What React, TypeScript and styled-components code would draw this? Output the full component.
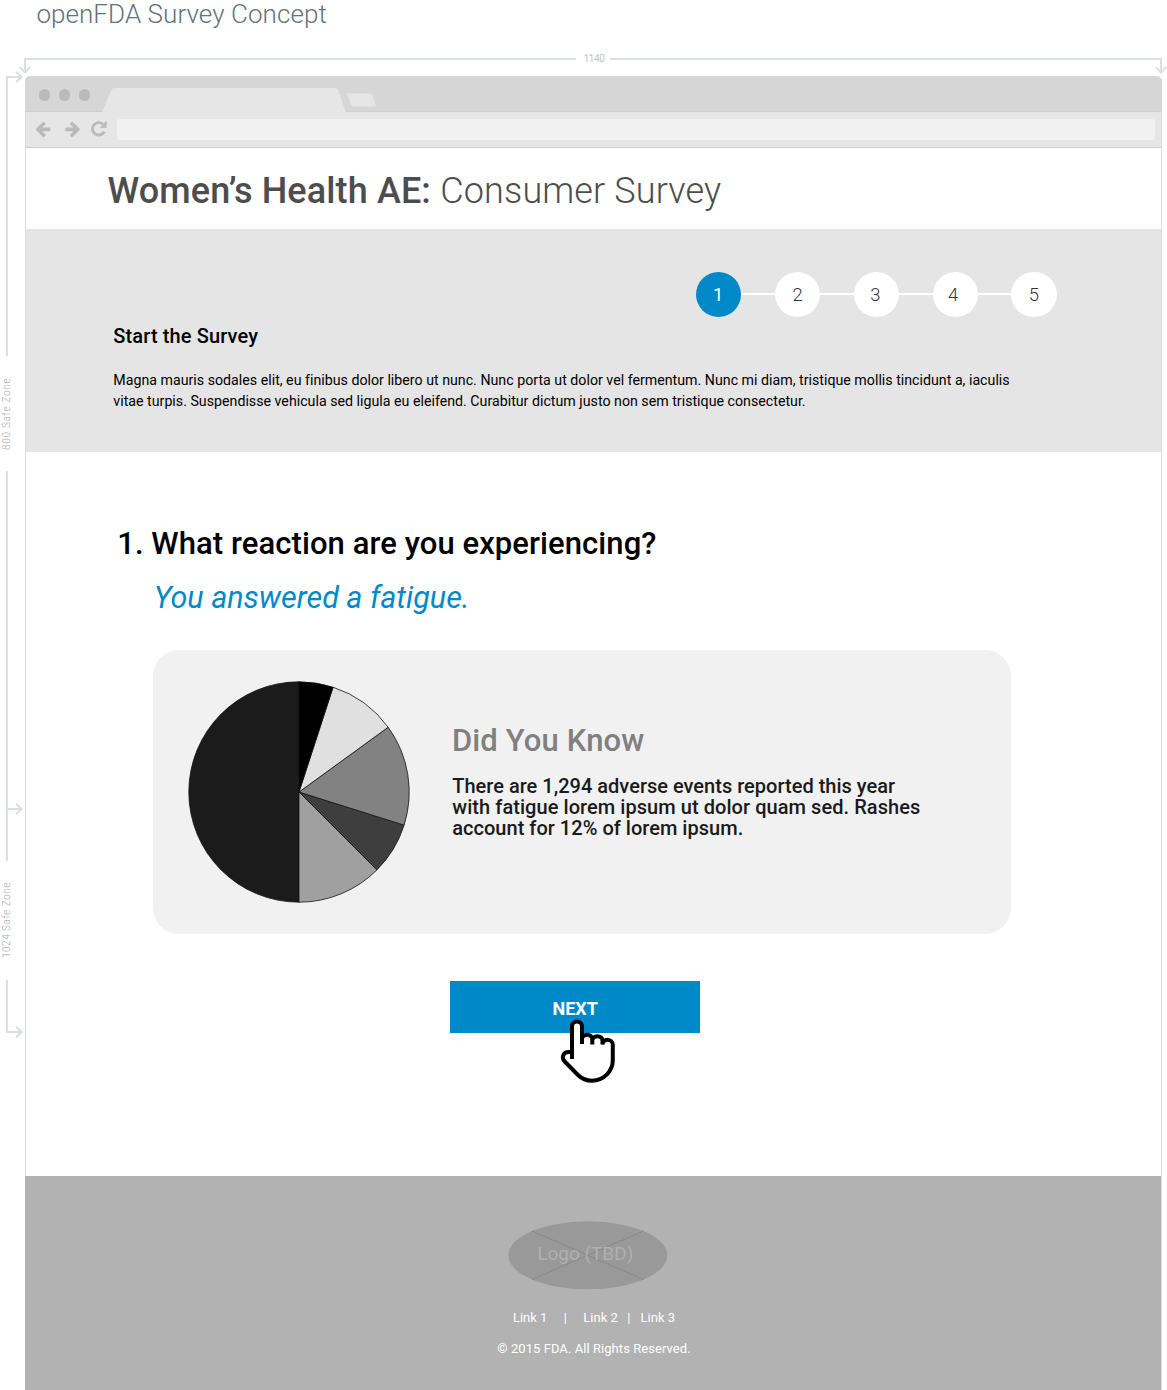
import React from "react";
import styled, { createGlobalStyle } from "styled-components";

const ruler = "#dbdfdf";
const blue = "#0089c9";

const GlobalStyle = createGlobalStyle`
  * { box-sizing: border-box; }
  body { margin: 0; background: #fff; font-family: Roboto, "Liberation Sans", sans-serif; color: #000; }
  h1, h2, h3, p, ol { margin: 0; padding: 0; }
`;

const Page = styled.div`
  width: 1167px;
  height: 1390px;
  overflow: hidden;
  display: grid;
  grid-template-columns: 25px 1137px;
  grid-template-rows: 58px 18px 1fr;
`;

const ConceptTitle = styled.div`
  grid-column: 1 / -1;
  padding-left: 36.4px;
  font-size: 26px;
  font-weight: 300;
  line-height: 28px;
  letter-spacing: 0.06px;
  color: #647278;
  white-space: nowrap;
`;

/* Dimension rulers */
const TopRuler = styled.div`
  grid-column: 2;
  display: flex;
  align-items: flex-start;
  margin-left: -1px;
`;

const TopSegment = styled.div<{ $end?: "left" | "right" }>`
  position: relative;
  height: 14px;
  border: 0 solid ${ruler};
  border-top-width: 2px;
  ${(p) => (p.$end === "left" ? "border-left-width: 2px; width: 552px;" : "border-right-width: 2px; flex: 1;")}
`;

const TopLabel = styled.span`
  width: 34px;
  margin-top: -5px;
  padding-left: 2px;
  text-align: center;
  font-size: 10px;
  line-height: 12px;
  letter-spacing: -0.45px;
  color: #bfc4c4;
`;

const LeftRuler = styled.div`
  grid-column: 1;
  grid-row: 3;
  display: flex;
  flex-direction: column;
  align-items: flex-start;
  padding-left: 6px;
`;

const LeftSegment = styled.div<{ $h: number; $top?: boolean; $bottom?: boolean }>`
  position: relative;
  width: 16px;
  height: ${(p) => p.$h}px;
  border: 0 solid ${ruler};
  border-left-width: 2px;
  border-top-width: ${(p) => (p.$top ? 2 : 0)}px;
  border-bottom-width: ${(p) => (p.$bottom ? 2 : 0)}px;
`;

const Tick = styled.i`
  display: block;
  width: 14px;
  height: 2px;
  margin-top: 337px;
  background: ${ruler};
`;

const LeftLabel = styled.span<{ $h: number; $spacing: number }>`
  height: ${(p) => p.$h}px;
  width: 12px;
  margin-left: -5px;
  display: flex;
  align-items: center;
  justify-content: center;
  writing-mode: vertical-rl;
  transform: rotate(180deg);
  font-size: 10px;
  font-weight: 300;
  line-height: 12px;
  letter-spacing: ${(p) => p.$spacing}px;
  color: #a9b0b0;
  white-space: nowrap;
`;

const HeadSvg = styled.svg<{ $x: number; $y: number; $down?: boolean }>`
  position: absolute;
  left: ${(p) => p.$x}px;
  top: ${(p) => p.$y}px;
  width: 12px;
  height: 12px;
  transform: rotate(${(p) => (p.$down ? 90 : 0)}deg);
  fill: none;
  stroke: ${ruler};
  stroke-width: 2;
`;

const Head = (p: { $x: number; $y: number; $down?: boolean }) => (
  <HeadSvg viewBox="0 0 12 12" {...p}><path d="M3 .8 8.6 6 3 11.2" /></HeadSvg>
);

/* Browser window */
const Browser = styled.div`
  grid-column: 2;
  grid-row: 3;
  display: flex;
  flex-direction: column;
`;

const TabBar = styled.div`
  height: 36px;
  display: flex;
  align-items: flex-end;
  background: #d6d6d6;
  border-top: 1px solid #dadada;
  border-bottom: 1px solid #cfcfcf;
  border-radius: 5px 5px 0 0;
`;

const Dots = styled.div`
  display: flex;
  gap: 8.6px;
  padding: 0 0 10.2px 13.6px;
  width: 77px;
`;

const Dot = styled.i`
  width: 11.4px;
  height: 11.4px;
  flex: none;
  border-radius: 50%;
  background: #b9babc;
`;

const TabShapes = styled.svg`
  width: 280px;
  height: 24px;
  margin-bottom: -1px;
`;

const Toolbar = styled.div`
  height: 36px;
  display: flex;
  align-items: center;
  padding: 0 6px 0 7.5px;
  background: #e6e6e6;
  border-bottom: 1px solid #cdcdcd;
  border-left: 1px solid #dcdcdc;
  border-right: 1px solid #dcdcdc;
`;

const NavIcon = styled.svg<{ $size: number; $gap: number; $flip?: boolean }>`
  width: ${(p) => p.$size}px;
  height: ${(p) => p.$size}px;
  margin: 0 ${(p) => p.$gap}px 1px 0;
  flex: none;
  fill: #b9babc;
  transform: ${(p) => (p.$flip ? "scaleX(-1)" : "none")};
`;

const AddressBar = styled.div`
  flex: 1;
  height: 21px;
  border-radius: 3px;
  background: #f1f1f1;
`;

const Content = styled.main`
  flex: 1;
  display: flex;
  flex-direction: column;
  border: solid #dcdcdc;
  border-width: 0 1px;
`;

const Header = styled.header`
  height: 81px;
  padding: 22px 0 0 81.5px;
`;

const SiteTitle = styled.h1`
  display: flex;
  gap: 9.3px;
  font-size: 36px;
  line-height: 42px;
  font-weight: 500;
  letter-spacing: 0.13px;
  color: #4d4d4d;
  white-space: nowrap;
`;

const Light = styled.span`
  font-weight: 300;
`;

const Intro = styled.section`
  height: 223px;
  background: #e5e5e5;
  padding: 42.7px 104.5px 0 87.3px;
`;

const Steps = styled.ol`
  display: flex;
  justify-content: flex-end;
  align-items: center;
  list-style: none;
`;

const Step = styled.li<{ $active?: boolean; $nudge: number }>`
  width: 45.2px;
  height: 45.2px;
  border-radius: 50%;
  display: flex;
  align-items: center;
  justify-content: center;
  padding-right: ${(p) => p.$nudge}px;
  font-size: 18.4px;
  font-weight: ${(p) => (p.$active ? 400 : 300)};
  color: ${(p) => (p.$active ? "#fff" : "#333")};
  background: ${(p) => (p.$active ? blue : "#fff")};
`;

const Connector = styled.li`
  width: 33.6px;
  height: 2px;
  background: #fff;
`;

const IntroTitle = styled.h2`
  margin-top: 7.3px;
  font-size: 20px;
  line-height: 24px;
  font-weight: 500;
  letter-spacing: 0.12px;
`;

const IntroText = styled.p`
  margin-top: 21.8px;
  font-size: 14.2px;
  line-height: 21px;
  letter-spacing: 0.01px;
  white-space: nowrap;
`;

const Survey = styled.section`
  flex: 1;
  display: flex;
  flex-direction: column;
  padding: 74px 150px 0 91.2px;
`;

const Question = styled.h2`
  font-size: 31px;
  line-height: 36px;
  font-weight: 500;
  letter-spacing: 0.08px;
  white-space: nowrap;
`;

const Answer = styled.p`
  margin: 18px 0 0 36.5px;
  font-size: 30.5px;
  line-height: 36px;
  font-style: italic;
  color: ${blue};
`;

const Card = styled.article`
  margin: 34px 0 0 36.3px;
  height: 284px;
  display: flex;
  align-items: center;
  gap: 42px;
  padding-left: 34.5px;
  border-radius: 26px;
  background: #f1f1f1;
`;

const Pie = styled.svg`
  width: 222px;
  height: 222px;
  flex: none;
  margin-top: 0.6px;
  stroke: #111;
  stroke-width: 0.8;
`;

const Fact = styled.div`
  margin-top: -21px;
`;

const FactTitle = styled.h3`
  font-size: 31px;
  line-height: 36px;
  font-weight: 500;
  letter-spacing: 0.12px;
  color: #808080;
`;

const FactText = styled.p`
  margin-top: 17px;
  padding: 0 0 1px 0.3px;
  font-size: 20px;
  line-height: 21px;
  font-weight: 500;
  color: #1a1a1a;
`;

const FactLine = styled.span<{ $spacing: number }>`
  display: block;
  letter-spacing: ${(p) => p.$spacing}px;
  white-space: nowrap;
`;

const NextButton = styled.button`
  position: relative;
  width: 250px;
  height: 52px;
  margin: 47px 0 0 332.8px;
  padding: 4px 0 0 0.5px;
  border: 0;
  background: ${blue};
  color: #fff;
  font: 700 18px/24px Roboto, sans-serif;
`;

const Hand = styled.svg`
  position: absolute;
  left: 108px;
  top: 36px;
  width: 60px;
  height: 68px;
`;

const Footer = styled.footer`
  height: 214px;
  margin-left: -1px;
  display: flex;
  flex-direction: column;
  align-items: center;
  padding: 45px 11px 0 0;
  background: #b2b2b2;
  color: #fff;
  font-size: 13px;
  line-height: 16px;
`;

const Logo = styled.div`
  display: grid;
  place-items: center;
  width: 160px;
  height: 69px;
  > * { grid-area: 1 / 1; }
`;

const LogoText = styled.span`
  padding: 0 4.5px 3.5px 0;
  font-size: 19px;
  line-height: 22px;
  color: #b0b0b0;
`;

const Links = styled.nav`
  display: flex;
  margin: 20px -13px 0 0;
  white-space: pre;
`;

const Divider = styled.span<{ $l: number; $r: number }>`
  margin: 0 ${(p) => p.$r}px 0 ${(p) => p.$l}px;
`;

const Copyright = styled.div`
  margin: 15px -13px 0 0;
  letter-spacing: 0.06px;
`;

const arrow = "M1664 896v128q0 53-32.500 90.500t-84.500 37.500h-704l293 294q38 36 38 90t-38 90l-75 76q-37 37-90 37-52 0-91-37l-651-652q-37-37-37-90 0-52 37-91l651-650q38-38 91-38 52 0 90 38l75 74q38 38 38 91t-38 91l-293 293h704q52 0 84.500 37.500t32.500 90.500z";

const slices = [
  { from: 180, to: 360, fill: "#1b1b1b" },
  { from: 135, to: 180, fill: "#a0a0a0" },
  { from: 107.5, to: 135, fill: "#3e3e3e" },
  { from: 54, to: 107.5, fill: "#828282" },
  { from: 18, to: 54, fill: "#e0e0e0" },
  { from: 0, to: 18, fill: "#000" },
];

const point = (deg: number) => {
  const a = (deg * Math.PI) / 180;
  return `${111 + 110.2 * Math.sin(a)} ${111 - 110.2 * Math.cos(a)}`;
};

const stepNudge = [1, -1, 2, 4, 0];

export default function App() {
  return (
    <Page>
      <GlobalStyle />
      <ConceptTitle>openFDA Survey Concept</ConceptTitle>

      <TopRuler>
        <TopSegment $end="left"><Head $x={-7} $y={4} $down /></TopSegment>
        <TopLabel>1140</TopLabel>
        <TopSegment $end="right"><Head $x={545} $y={4} $down /></TopSegment>
      </TopRuler>

      <LeftRuler>
        <LeftSegment $h={280} $top><Head $x={5} $y={-7} /></LeftSegment>
        <LeftLabel $h={115} $spacing={0.7}>800 Safe Zone</LeftLabel>
        <LeftSegment $h={390}><Tick /><Head $x={5} $y={332} /></LeftSegment>
        <LeftLabel $h={119} $spacing={0.5}>1024 Safe Zone</LeftLabel>
        <LeftSegment $h={53} $bottom><Head $x={5} $y={46} /></LeftSegment>
      </LeftRuler>

      <Browser>
        <TabBar>
          <Dots><Dot /><Dot /><Dot /></Dots>
          <TabShapes viewBox="0 0 280 24">
            <path fill="#e6e6e6" d="M0 24 9.300 2.300Q10.300 0 13 0H232Q235 0 236.200 2.300L243.700 24Z" />
            <path fill="#e6e6e6" stroke="#dedede" strokeWidth=".8" d="M245 5.500h22.500q2 0 2.800 1.500l3.700 11.300H252q-2 0-2.700-1.500Z" />
          </TabShapes>
        </TabBar>
        <Toolbar>
          <NavIcon viewBox="0 0 1792 1792" $size={17.7} $gap={12.4}><path d={arrow} /></NavIcon>
          <NavIcon viewBox="0 0 1792 1792" $size={17.7} $gap={9.2} $flip><path d={arrow} /></NavIcon>
          <NavIcon viewBox="0 0 18 18" $size={18} $gap={8.5}>
            <path d="M14.200 11.700A6.200 6.200 0 1 1 12.900 4.300" fill="none" stroke="#b9babc" strokeWidth="2.9" />
            <path d="M16.300 1.300V7.500H10.100Z" stroke="#b9babc" strokeWidth=".6" strokeLinejoin="round" />
          </NavIcon>
          <AddressBar />
        </Toolbar>

        <Content>
          <Header>
            <SiteTitle>Women’s Health AE: <Light>Consumer Survey</Light></SiteTitle>
          </Header>

          <Intro>
            <Steps>
              {stepNudge.map((nudge, i) => (
                <React.Fragment key={i}>
                  {i > 0 && <Connector />}
                  <Step $active={i === 0} $nudge={nudge}>{i + 1}</Step>
                </React.Fragment>
              ))}
            </Steps>
            <IntroTitle>Start the Survey</IntroTitle>
            <IntroText>
              Magna mauris sodales elit, eu finibus dolor libero ut nunc. Nunc porta ut dolor vel fermentum. Nunc mi diam, tristique mollis tincidunt a, iaculis<br />
              vitae turpis. Suspendisse vehicula sed ligula eu eleifend. Curabitur dictum justo non sem tristique consectetur.
            </IntroText>
          </Intro>

          <Survey>
            <Question>1. What reaction are you experiencing?</Question>
            <Answer>You answered a fatigue.</Answer>
            <Card>
              <Pie viewBox="0 0 222 222">
                {slices.map((s) => (
                  <path key={s.from} fill={s.fill} d={`M111 111L${point(s.from)}A110.2 110.2 0 0 1 ${point(s.to)}Z`} />
                ))}
              </Pie>
              <Fact>
                <FactTitle>Did You Know</FactTitle>
                <FactText>
                  <FactLine $spacing={0.01}>There are 1,294 adverse events reported this year</FactLine>
                  <FactLine $spacing={0.06}>with fatigue lorem ipsum ut dolor quam sed. Rashes</FactLine>
                  <FactLine $spacing={0.02}>account for 12% of lorem ipsum.</FactLine>
                </FactText>
              </Fact>
            </Card>
            <NextButton>
              NEXT
              <Hand viewBox="558 1017 60 68">
                <path
                  fill="#fff"
                  stroke="#000"
                  strokeWidth="4"
                  d="M572 1059V1026.500a5 5 0 0 1 10 0V1044V1039.500C582 1033 592.300 1033 592.300 1039.500V1044.500V1041C592.300 1034.500 602.500 1034.500 602.500 1041V1044.500C603 1038 612.800 1038.500 612.800 1045V1060C612.800 1071.500 603.500 1080.700 592 1080.700C586.500 1080.700 581.500 1078.500 578 1075L564.700 1061.500C561 1057.500 563.500 1052 568.500 1052H572"
                />
              </Hand>
            </NextButton>
          </Survey>

          <Footer>
            <Logo>
              <svg width="160" height="69" viewBox="0 0 160 69">
                <ellipse cx="79.800" cy="34.300" rx="79.500" ry="34" fill="#999" />
                <path d="M24 10 135.500 58.500M135.500 10 24 58.500" stroke="#898989" />
              </svg>
              <LogoText>Logo (TBD)</LogoText>
            </Logo>
            <Links>
              <span>Link 1</span>
              <Divider $l={16.3} $r={16.5}>|</Divider>
              <span>Link 2</span>
              <Divider $l={9.3} $r={10.3}>|</Divider>
              <span>Link 3</span>
            </Links>
            <Copyright>© 2015 FDA. All Rights Reserved.</Copyright>
          </Footer>
        </Content>
      </Browser>
    </Page>
  );
}
